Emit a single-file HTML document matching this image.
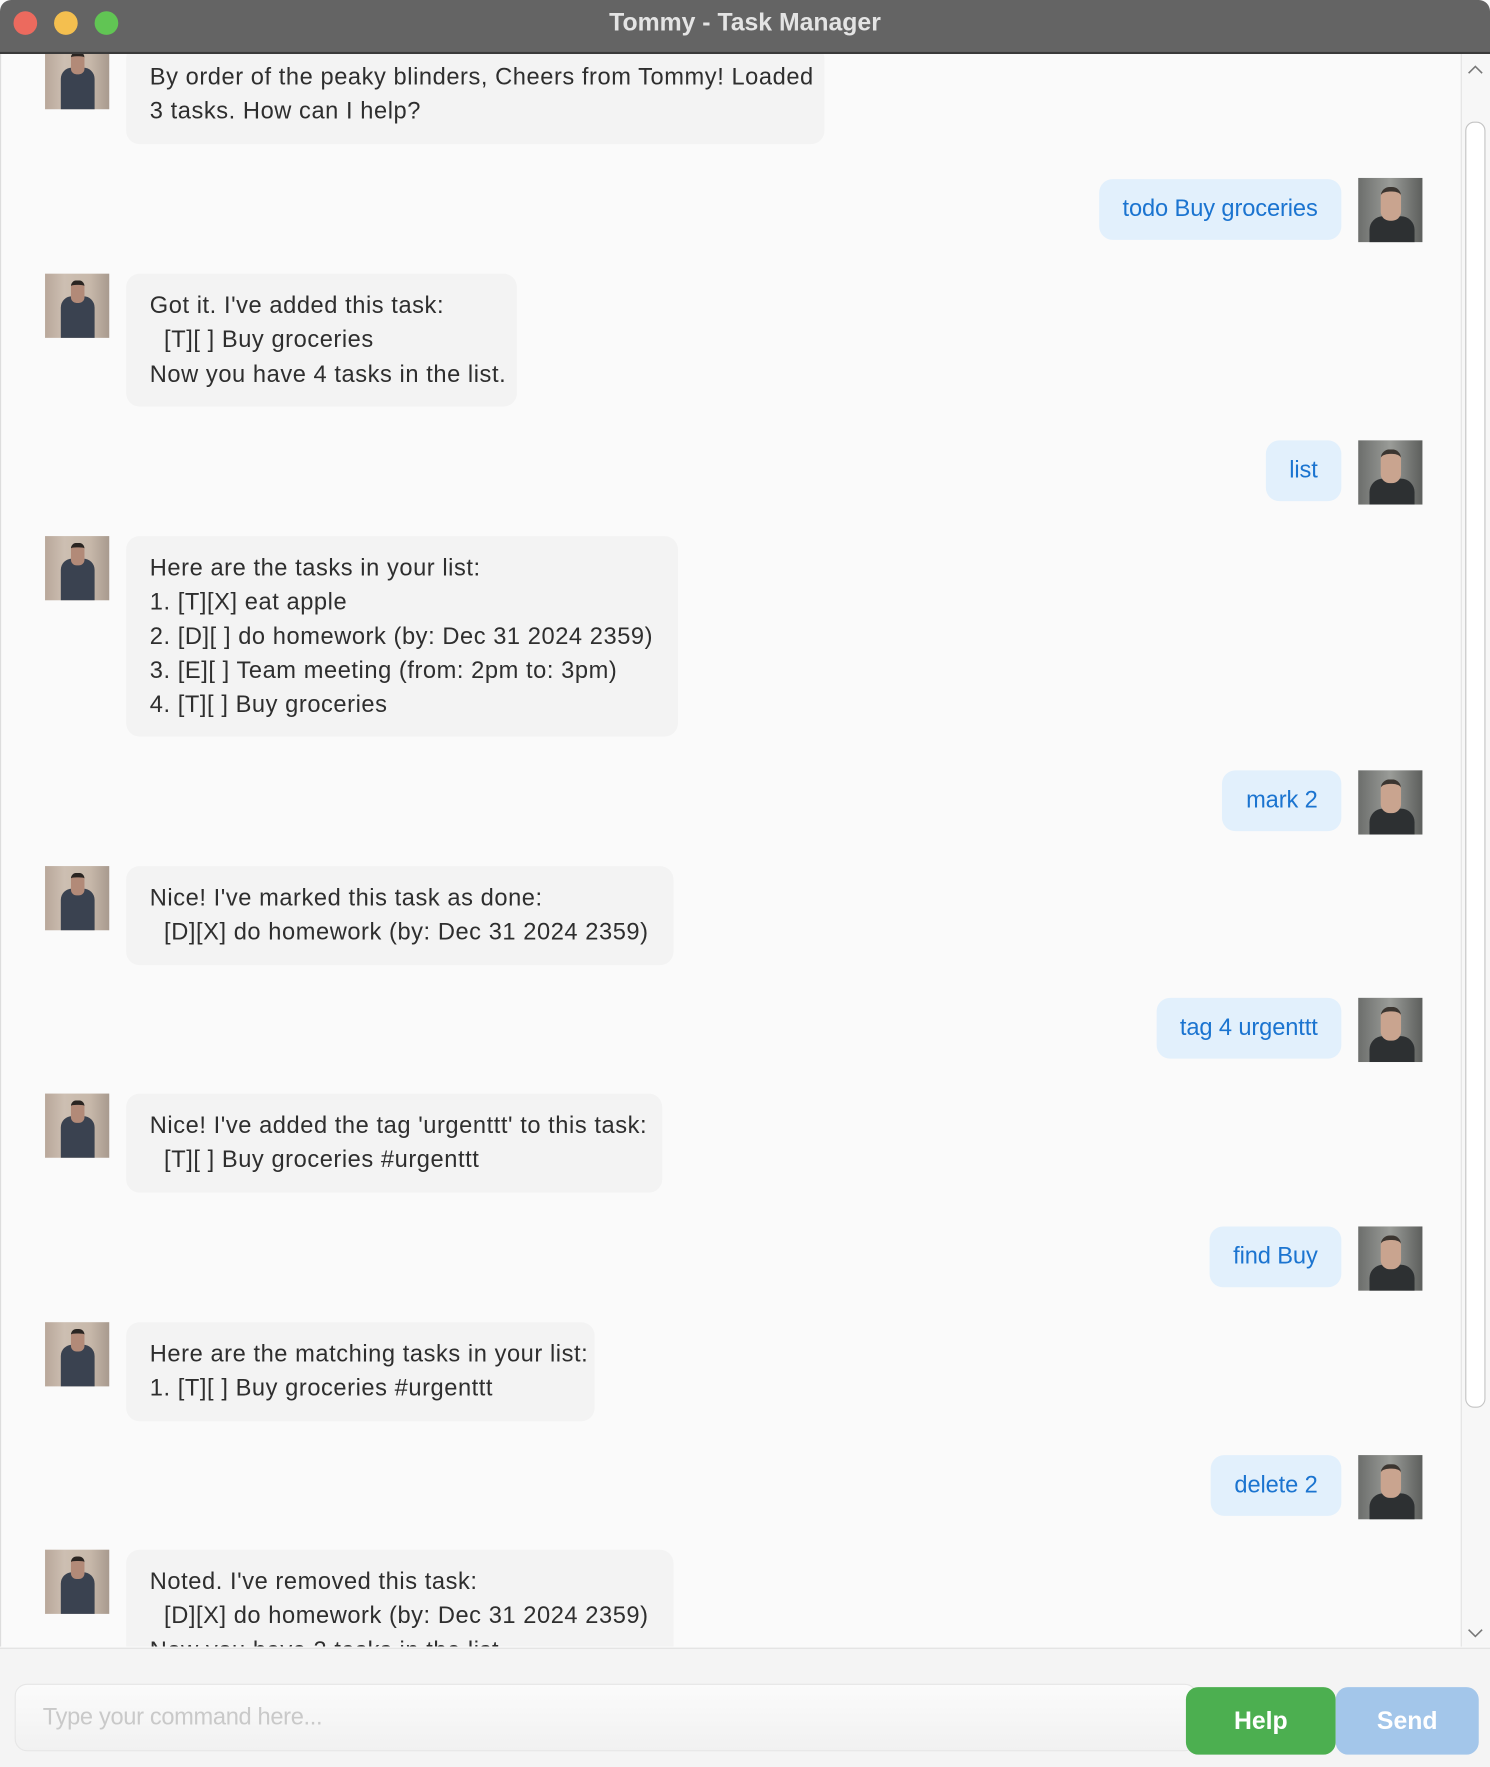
<!DOCTYPE html>
<html><head><meta charset="utf-8"><style>
html,body{margin:0;padding:0;background:#fafafa;overflow:hidden}
#s{position:absolute;left:0;top:0;width:1323px;height:1568px;transform:scale(1.12623);transform-origin:0 0;font-family:"Liberation Sans",sans-serif;background:#fafafa}
.tb{position:absolute;left:0;top:0;width:1323px;height:46px;background:#646464;border-bottom:2px solid #3a3a3a;border-radius:10px 10px 0 0}
.tl{position:absolute;top:10px;width:21px;height:21px;border-radius:50%}
.title{position:absolute;left:0;width:1323px;top:7px;text-align:center;color:#e4e4e4;font-weight:bold;font-size:22px}
.chat{position:absolute;left:0;top:48px;width:1297px;height:1414px;overflow:hidden;background:#fafafa;border-left:1px solid #ddd}
.sb{position:absolute;left:1297px;top:48px;width:26px;height:1414px;background:#f7f7f7;border-left:1px solid #e2e2e2}
.thumb{position:absolute;left:3px;top:60px;width:16px;height:1140px;background:#fff;border:1px solid #c4c4c4;border-radius:8px}
.av{position:absolute;width:57px;height:57px;overflow:hidden}
.bav{left:39px;background:linear-gradient(90deg,#b8a79a 0,#cdbfb2 30%,#c7b8aa 70%,#a89a8e 100%)}
.bav:before{content:"";position:absolute;left:14px;top:20px;width:30px;height:40px;background:#3a4250;border-radius:10px 10px 0 0}
.bav:after{content:"";position:absolute;left:23px;top:6px;width:12px;height:16px;background:#b28a78;border-radius:5px;border-top:4px solid #2a2522}
.uav{left:1205px;background:linear-gradient(90deg,#6c6e6c,#9a9c98 50%,#5c5e5c)}
.uav:before{content:"";position:absolute;left:10px;top:34px;width:40px;height:25px;background:#2d3032;border-radius:12px 12px 0 0}
.uav:after{content:"";position:absolute;left:20px;top:8px;width:18px;height:26px;background:#c9a48f;border-radius:8px;border-top:4px solid #3b3530}
.bb{position:absolute;left:111px;background:#f3f3f3;border-radius:12px;padding:14px 21px 13px;font-size:21px;line-height:30.3px;color:#2e2e2e;white-space:pre;letter-spacing:0.5px}
.ub{position:absolute;right:107px;height:54px;line-height:54px;background:#e2f0fc;border-radius:12px;padding:0 21px;font-size:21px;color:#1b74d0;white-space:pre;letter-spacing:-0.1px}
.bot{position:absolute;left:0;top:1463px;width:1323px;height:105px;background:#f4f4f4;border-top:1px solid #e0e0e0}
.inp{position:absolute;left:13px;top:31px;width:1050px;height:60px;border:1px solid #e6e6e6;border-radius:11px;background:linear-gradient(#fbfbfb,#f1f1f1);box-sizing:border-box}
.ph{position:absolute;left:24px;top:17px;font-size:21px;color:#c9c9c9;letter-spacing:-0.3px}
.btn{position:absolute;top:34px;height:60px;line-height:60px;text-align:center;color:#fff;font-weight:bold;font-size:22px;border-radius:11px}
.ar{position:absolute;left:4px;width:16px;height:16px}
</style></head><body><div id="s">
<div class="tb">
<div class="tl" style="left:12px;background:#ec6a5e"></div>
<div class="tl" style="left:48px;background:#f4bf4f"></div>
<div class="tl" style="left:84px;background:#61c554"></div>
<div class="title">Tommy - Task Manager</div>
</div>
<div class="chat">
<div class="av bav" style="top:-8px"></div>
<div class="bb" style="top:-8px;width:578px">By order of the peaky blinders, Cheers from Tommy! Loaded
3 tasks. How can I help?</div>
<div class="ub" style="top:111px">todo Buy groceries</div>
<div class="av uav" style="top:110px"></div>
<div class="av bav" style="top:195px"></div>
<div class="bb" style="top:195px;width:305px">Got it. I've added this task:
  [T][ ] Buy groceries
Now you have 4 tasks in the list.</div>
<div class="ub" style="top:343px">list</div>
<div class="av uav" style="top:343px"></div>
<div class="av bav" style="top:428px"></div>
<div class="bb" style="top:428px;width:448px">Here are the tasks in your list:
1. [T][X] eat apple
2. [D][ ] do homework (by: Dec 31 2024 2359)
3. [E][ ] Team meeting (from: 2pm to: 3pm)
4. [T][ ] Buy groceries</div>
<div class="ub" style="top:636px">mark 2</div>
<div class="av uav" style="top:636px"></div>
<div class="av bav" style="top:721px"></div>
<div class="bb" style="top:721px;width:444px">Nice! I've marked this task as done:
  [D][X] do homework (by: Dec 31 2024 2359)</div>
<div class="ub" style="top:838px">tag 4 urgenttt</div>
<div class="av uav" style="top:838px"></div>
<div class="av bav" style="top:923px"></div>
<div class="bb" style="top:923px;width:434px">Nice! I've added the tag 'urgenttt' to this task:
  [T][ ] Buy groceries #urgenttt</div>
<div class="ub" style="top:1041px">find Buy</div>
<div class="av uav" style="top:1041px"></div>
<div class="av bav" style="top:1126px"></div>
<div class="bb" style="top:1126px;width:374px">Here are the matching tasks in your list:
1. [T][ ] Buy groceries #urgenttt</div>
<div class="ub" style="top:1244px">delete 2</div>
<div class="av uav" style="top:1244px"></div>
<div class="av bav" style="top:1328px"></div>
<div class="bb" style="top:1328px;width:444px">Noted. I've removed this task:
  [D][X] do homework (by: Dec 31 2024 2359)
Now you have 3 tasks in the list.</div>
</div>
<div class="sb">
<svg class="ar" style="top:6px" viewBox="0 0 16 16"><path d="M2 11 L8 5 L14 11" fill="none" stroke="#777" stroke-width="1.4"/></svg>
<div class="thumb"></div>
<svg class="ar" style="bottom:4px" viewBox="0 0 16 16"><path d="M2 5 L8 11 L14 5" fill="none" stroke="#777" stroke-width="1.4"/></svg>
</div>
<div class="bot">
<div class="inp"><div class="ph">Type your command here...</div></div>
<div class="btn" style="left:1053px;width:133px;background:#4caf50">Help</div>
<div class="btn" style="left:1186px;width:127px;background:#a3c6ea">Send</div>
</div>
</div></body></html>
